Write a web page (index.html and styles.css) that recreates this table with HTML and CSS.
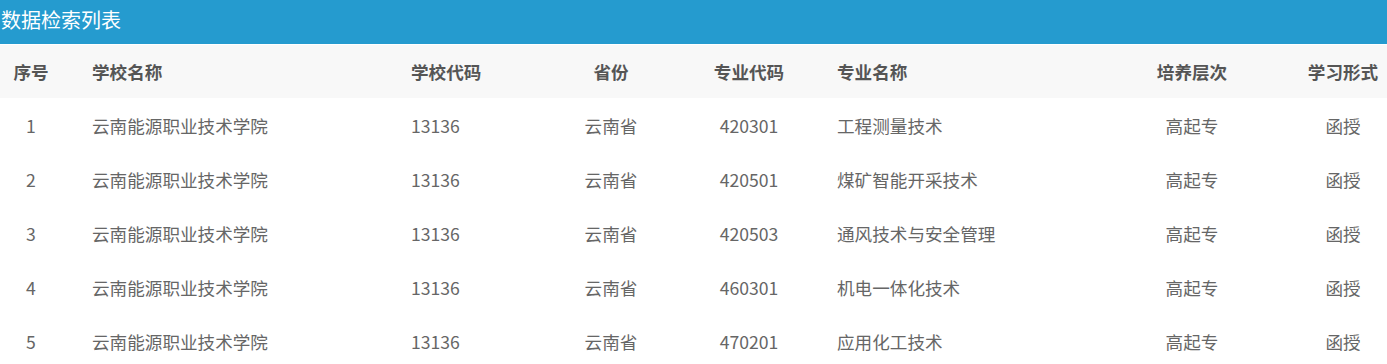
FILE: index.html
```html
<!DOCTYPE html>
<html lang="zh-CN">
<head>
<meta charset="utf-8">
<title>数据检索列表</title>
<link rel="stylesheet" href="styles.css">
</head>
<body>
<div class="panel">
  <div class="panel-title">数据检索列表</div>
  <table class="list">
    <colgroup>
      <col class="c1"><col class="c2"><col class="c3"><col class="c4"><col class="c5"><col class="c6"><col class="c7"><col class="c8">
    </colgroup>
    <thead>
      <tr>
        <th class="ctr">序号</th>
        <th class="lft">学校名称</th>
        <th class="lft">学校代码</th>
        <th class="ctr">省份</th>
        <th class="ctr">专业代码</th>
        <th class="lft2">专业名称</th>
        <th class="ctr">培养层次</th>
        <th class="ctr">学习形式</th>
      </tr>
    </thead>
    <tbody>
      <tr><td class="ctr">1</td><td class="lft">云南能源职业技术学院</td><td class="lft">13136</td><td class="ctr">云南省</td><td class="ctr">420301</td><td class="lft2">工程测量技术</td><td class="ctr">高起专</td><td class="ctr">函授</td></tr>
      <tr><td class="ctr">2</td><td class="lft">云南能源职业技术学院</td><td class="lft">13136</td><td class="ctr">云南省</td><td class="ctr">420501</td><td class="lft2">煤矿智能开采技术</td><td class="ctr">高起专</td><td class="ctr">函授</td></tr>
      <tr><td class="ctr">3</td><td class="lft">云南能源职业技术学院</td><td class="lft">13136</td><td class="ctr">云南省</td><td class="ctr">420503</td><td class="lft2">通风技术与安全管理</td><td class="ctr">高起专</td><td class="ctr">函授</td></tr>
      <tr><td class="ctr">4</td><td class="lft">云南能源职业技术学院</td><td class="lft">13136</td><td class="ctr">云南省</td><td class="ctr">460301</td><td class="lft2">机电一体化技术</td><td class="ctr">高起专</td><td class="ctr">函授</td></tr>
      <tr><td class="ctr">5</td><td class="lft">云南能源职业技术学院</td><td class="lft">13136</td><td class="ctr">云南省</td><td class="ctr">470201</td><td class="lft2">应用化工技术</td><td class="ctr">高起专</td><td class="ctr">函授</td></tr>
    </tbody>
  </table>
</div>
</body>
</html>
```
FILE: styles.css
```css
* { box-sizing: border-box; }
html, body {
  margin: 0;
  padding: 0;
  background: #fff;
  font-family: "Noto Sans CJK SC", "Noto Sans", "Liberation Sans", sans-serif;
}
.panel { width: 1387px; }
.panel-title {
  height: 44px;
  background: #259bcf;
  color: #fff;
  font-size: 20px;
  line-height: 40px;
  padding-left: 1px;
}
.list {
  width: 1387px;
  border-collapse: collapse;
  table-layout: fixed;
  margin-top: 1px;
}
.c1 { width: 62px; }
.c2 { width: 319px; }
.c3 { width: 160px; }
.c4 { width: 140px; }
.c5 { width: 136px; }
.c6 { width: 268px; }
.c7 { width: 214px; }
.c8 { width: 88px; }
.list th, .list td {
  height: 54px;
  padding: 0;
  font-size: 17.6px;
  white-space: nowrap;
}
.list thead tr { background: #f8f8f8; }
.list th {
  font-weight: bold;
  color: #555;
  height: 53px;
}
.list td { color: #666; font-weight: normal; }
.ctr { text-align: center; }
.lft { text-align: left; padding-left: 30px !important; }
.lft2 { text-align: left; padding-left: 20px !important; }
```
